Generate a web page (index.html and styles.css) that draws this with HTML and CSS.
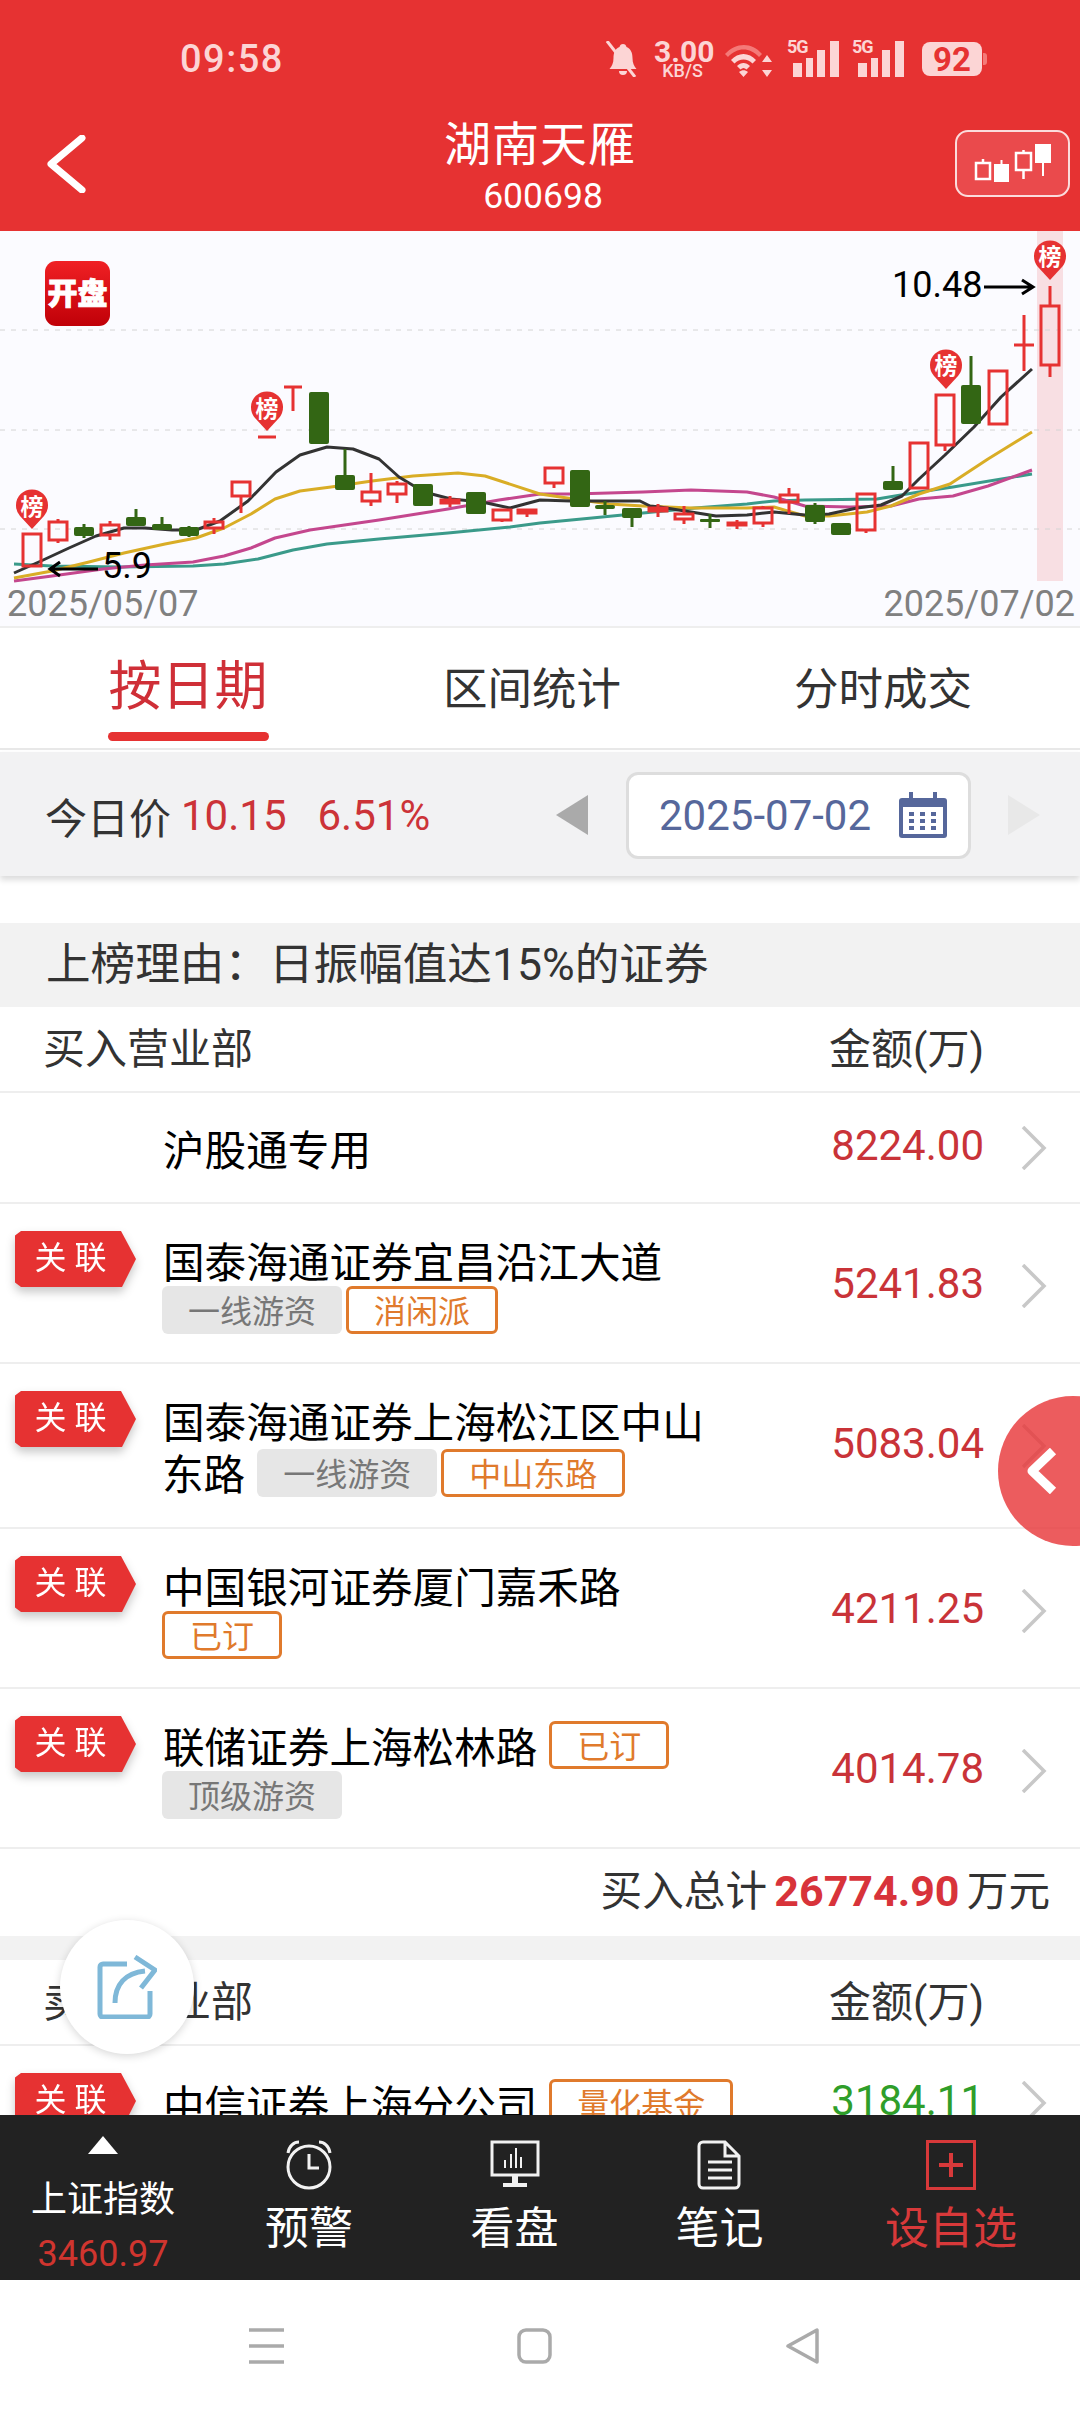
FILE: index.html
```html
<!DOCTYPE html>
<html lang="zh-CN">
<head>
  <meta charset="UTF-8" />
  <meta name="viewport" content="width=device-width, initial-scale=1.0" />
  <title>湖南天雁 龙虎榜</title>
  <link rel="stylesheet" href="styles.css">
</head>
<body>
  <div class="page">
    <header class="top">
      <div class="status">
        <span class="time">09:58</span>
        <div class="status-icons">
          <svg class="ic-bell" viewBox="0 0 36 36"><path d="M18 3c-2 0-3 1-3.500 3C10 8 8.500 12 8.500 17c0 5-1.500 8-4 11h27c-2.500-3-4-6-4-11 0-5-1.500-9-6-11C21 4 20 3 18 3zM14 30a4 4 0 0 0 8 0z"/><path class="cut" d="M2 0l28 36" /></svg>
          <div class="speed"><b>3.00</b><small>KB/S</small></div>
          <svg class="ic-wifi" viewBox="0 0 50 36"><path class="dim" d="M1 13C12 1 28 1 38 13l-3 3C26 6 13 6 4 16z"/><path d="M7 19c7-8 18-8 25 0l-3.500 3.500c-5-5.500-13-5.500-18 0zM13 25c4-4 9-4 13 0l-3.500 3.500c-2-2-4-2-6 0zM19.500 36l-4.500-5c3-2.500 6-2.500 9 0zM43 14l5 7H38zM43 36l-5-7h10z"/></svg>
          <div class="signal"><span>5G</span><svg viewBox="0 0 52 36"><path d="M6 22h9v14H6zM19 17h7v19h-7zM30 9h8v27h-8zM43 0h9v36h-9z"/></svg></div>
          <div class="signal"><span>5G</span><svg viewBox="0 0 52 36"><path d="M6 22h9v14H6zM19 17h7v19h-7zM30 9h8v27h-8zM43 0h9v36h-9z"/></svg></div>
          <div class="battery">92</div>
        </div>
      </div>
      <div class="titlebar">
        <svg class="back" viewBox="0 0 40 58"><path d="M36 3L5 29l31 26" /></svg>
        <div class="title">
          <h1>湖南天雁</h1>
          <p>600698</p>
        </div>
        <div class="kline-btn">
          <svg viewBox="0 0 78 40"><path class="o" d="M1 20h14v16H1zM8 16v4M8 36v1M41 10h15v17H41zM48.500 7v3M48.500 27v9"/><path class="f" d="M19 21h15v18H19zM25.500 17h2v4h-2zM60 1h16v19H60zM67 20h2v13h-2z"/></svg>
        </div>
      </div>
    </header>

    <section class="chart">
      <svg class="chart-svg" viewBox="0 231 1080 397" width="1080" height="397">
        <defs>
          <linearGradient id="kp" x1="0" y1="0" x2="0" y2="1">
            <stop offset="0" stop-color="#f02024" />
            <stop offset="1" stop-color="#c00008" />
          </linearGradient>
        </defs>
        <rect class="today" x="1037" y="231" width="26" height="350" />
        <path class="grid" d="M0 330h1080M0 430h1080M0 529h1080" />

        <polyline class="ma ma-teal" points="14,564 52,566 120,567 193,566 224,564 258,559 293,550 327,544 379,539 448,533 510,527 540,523 592,518 643,513 695,508 747,504 774,501 805,500 877,499 919,492 953,487 1032,474" />
        <polyline class="ma ma-pink" points="14,581 52,576 103,569 145,565 193,562 224,556 251,548 275,538 310,530 379,520 448,509 499,500 540,494 574,494 643,492 691,490 747,492 774,497 805,506 850,507 891,506 919,499 953,496 988,486 1032,470" />
        <polyline class="ma ma-yellow" points="14,578 52,571 89,562 124,553 165,544 196,538 224,528 251,514 275,499 300,491 331,487 372,481 413,476 458,473 485,476 540,494 574,499 609,504 643,506 691,508 747,508 774,507 805,516 829,516 867,512 891,506 919,494 950,484 988,459 1032,432" />
        <polyline class="ma ma-black" points="14,573 41,561 69,548 96,536 124,528 145,528 172,530 196,530 220,521 248,501 276,472 300,455 327,447 353,449 379,459 399,477 424,492 451,499 482,502 510,508 540,500 571,501 640,501 650,506 660,507 691,512 716,516 747,515 774,512 805,515 829,514 857,508 881,505 902,496 919,479 945,455 974,427 1001,397 1032,369" />

        <path class="wick-up" d="M58 519v3M58 540v3M110 521v4M110 535v5M214 518v4M214 528v6M241 496v17M258 437h18M284 387h18M293 387v24M371 473v19M371 501v5M397 481v3M397 494v9M450 496v11M502 520v2M527 513v4M554 483v5M658 504v13M684 506v8M684 519v5M737 520v9M763 506v2M763 523v4M789 488v7M789 502v12M866 530v3M945 445v6M1024 315v56M1014 345h20M1050 286v20M1050 365v12" />
        <g class="body-up">
          <rect x="23" y="534" width="18" height="32" />
          <rect x="49" y="522" width="18" height="18" />
          <rect x="101" y="525" width="18" height="10" />
          <rect x="205" y="522" width="18" height="6" />
          <rect x="232" y="482" width="18" height="14" />
          <rect x="362" y="492" width="18" height="9" />
          <rect x="388" y="484" width="18" height="10" />
          <rect x="441" y="500" width="18" height="3" />
          <rect x="493" y="510" width="18" height="10" />
          <rect x="518" y="510" width="18" height="3" />
          <rect x="545" y="468" width="18" height="15" />
          <rect x="649" y="508" width="18" height="3" />
          <rect x="675" y="514" width="18" height="5" />
          <rect x="728" y="523" width="18" height="2" />
          <rect x="754" y="508" width="18" height="15" />
          <rect x="780" y="495" width="18" height="7" />
          <rect x="857" y="494" width="18" height="36" />
          <rect x="910" y="443" width="18" height="45" />
          <rect x="936" y="395" width="18" height="50" />
          <rect x="989" y="371" width="18" height="53" />
          <rect x="1041" y="306" width="18" height="59" />
        </g>
        <path class="wick-down" d="M84 524v14M136 509v10M162 517v8M189 526v11M345 449v30M605 501v14M632 517v10M710 514v14M815 503v21M893 466v18M971 356v30" />
        <g class="body-down">
          <rect x="74" y="527" width="20" height="9" rx="2" />
          <rect x="126" y="517" width="20" height="9" rx="2" />
          <rect x="152" y="524" width="20" height="6" rx="2" />
          <rect x="179" y="527" width="20" height="9" rx="2" />
          <rect x="309" y="392" width="20" height="52" rx="2" />
          <rect x="335" y="475" width="20" height="15" rx="2" />
          <rect x="413" y="484" width="20" height="22" rx="2" />
          <rect x="466" y="492" width="20" height="22" rx="2" />
          <rect x="570" y="470" width="20" height="37" rx="2" />
          <rect x="595" y="505" width="20" height="4" rx="2" />
          <rect x="622" y="508" width="20" height="10" rx="2" />
          <rect x="700" y="519" width="20" height="3" rx="1" />
          <rect x="805" y="505" width="20" height="17" rx="2" />
          <rect x="831" y="523" width="20" height="12" rx="2" />
          <rect x="883" y="481" width="20" height="9" rx="2" />
          <rect x="961" y="385" width="20" height="39" rx="2" />
        </g>

        <g class="pin">
          <path d="M32 529l-12-13a16 16 0 1 1 24 0z" />
          <text x="32" y="515">榜</text>
          <path d="M267 431l-12-13a16 16 0 1 1 24 0z" />
          <text x="267" y="417">榜</text>
          <path d="M946 389l-12-13a16 16 0 1 1 24 0z" />
          <text x="946" y="374">榜</text>
          <path d="M1050 280l-12-13a16 16 0 1 1 24 0z" />
          <text x="1050" y="265">榜</text>
        </g>

        <rect x="45" y="261" width="65" height="65" rx="11" fill="url(#kp)" />
        <text class="kp-text" x="77.500" y="304">开盘</text>

        <text class="price" x="892" y="297">10.48</text>
        <path class="arrow" d="M984 287h48M1022 280l11 7-11 7" />
        <text class="price" x="102" y="578">5.9</text>
        <path class="arrow" d="M98 569H51M60 562l-10 7 10 7" />

        <text class="axis" x="7" y="616">2025/05/07</text>
        <text class="axis axis-end" x="1075" y="616">2025/07/02</text>
      </svg>
    </section>

    <nav class="tabs">
      <div class="tab active"><span>按日期</span><i></i></div>
      <div class="tab"><span>区间统计</span></div>
      <div class="tab"><span>分时成交</span></div>
    </nav>

    <div class="datebar">
      <span class="today-label">今日价</span>
      <span class="today-val">10.15</span>
      <span class="today-val pct">6.51%</span>
      <span class="tri tri-left"></span>
      <div class="datebox">
        <span>2025-07-02</span>
        <svg viewBox="0 0 48 46"><path class="cal" d="M3 6h42a3 3 0 0 1 3 3v34a3 3 0 0 1-3 3H3a3 3 0 0 1-3-3V9a3 3 0 0 1 3-3z"/><path class="cal-in" d="M4 15h40v27H4z"/><path class="cal-pin" d="M12 0v11M36 0v11"/><path class="cal-dot" d="M10 20h5v4h-5zM21 20h5v4h-5zM32 20h5v4h-5zM10 27h5v4h-5zM21 27h5v4h-5zM32 27h5v4h-5zM10 34h5v4h-5zM21 34h5v4h-5zM32 34h5v4h-5z"/></svg>
      </div>
      <span class="tri tri-right"></span>
    </div>

    <main class="list">
      <div class="reason">上榜理由：日振幅值达15%的证券</div>

      <div class="list-head"><span>买入营业部</span><span>金额(万)</span></div>

      <div class="row row-single">
        <div></div>
        <div class="name"><span class="nm">沪股通专用</span></div>
        <div class="amount">8224.00</div>
        <svg class="chev" viewBox="0 0 26 44"><path d="M2 1l21 21L2 43" /></svg>
      </div>
      <div class="row">
        <div class="rel"><span>关 联</span></div>
        <div class="name"><span class="nm">国泰海通证券宜昌沿江大道</span><span class="chip">一线游资</span><span class="chip orange">消闲派</span></div>
        <div class="amount">5241.83</div>
        <svg class="chev" viewBox="0 0 26 44"><path d="M2 1l21 21L2 43" /></svg>
      </div>
      <div class="row row-tall">
        <div class="rel"><span>关 联</span></div>
        <div class="name"><span class="nm">国泰海通证券上海松江区中山东路</span><span class="chip">一线游资</span><span class="chip orange">中山东路</span></div>
        <div class="amount">5083.04</div>
        <svg class="chev" viewBox="0 0 26 44"><path d="M2 1l21 21L2 43" /></svg>
      </div>
      <div class="row">
        <div class="rel"><span>关 联</span></div>
        <div class="name"><span class="nm">中国银河证券厦门嘉禾路</span><span class="chip orange">已订</span></div>
        <div class="amount">4211.25</div>
        <svg class="chev" viewBox="0 0 26 44"><path d="M2 1l21 21L2 43" /></svg>
      </div>
      <div class="row">
        <div class="rel"><span>关 联</span></div>
        <div class="name"><span class="nm">联储证券上海松林路</span><span class="chip orange same-line">已订</span><span class="chip">顶级游资</span></div>
        <div class="amount">4014.78</div>
        <svg class="chev" viewBox="0 0 26 44"><path d="M2 1l21 21L2 43" /></svg>
      </div>

      <div class="total">买入总计 <b>26774.90</b> 万元</div>
      <div class="band"></div>

      <div class="list-head"><span>卖出营业部</span><span>金额(万)</span></div>
      <div class="row">
        <div class="rel"><span>关 联</span></div>
        <div class="name"><span class="nm">中信证券上海分公司</span><span class="chip orange same-line">量化基金</span></div>
        <div class="amount green">3184.11</div>
        <svg class="chev" viewBox="0 0 26 44"><path d="M2 1l21 21L2 43" /></svg>
      </div>
    </main>

    <footer class="bottom">
      <div class="index">
        <i class="up-tri"></i>
        <span>上证指数</span>
        <em>3460.97</em>
      </div>
      <div class="nav-item">
        <svg viewBox="0 0 50 50"><circle cx="25" cy="27" r="21" /><path d="M25 14v14h10M4 13C5 6 10 2 15 2M46 13C45 6 40 2 35 2" /></svg>
        <span>预警</span>
      </div>
      <div class="nav-item">
        <svg viewBox="0 0 50 50"><path d="M2 2h46v33H2z" /><path class="fill" d="M22 35h6v8h-6zM13 43h24v4H13z"/><path d="M15 28v-8M21 28V14M26 28V8M31 28V17" class="thin" /></svg>
        <span>看盘</span>
      </div>
      <div class="nav-item">
        <svg viewBox="0 0 50 50"><path d="M8 2h22l14 14v28a4 4 0 0 1-4 4H8a4 4 0 0 1-4-4V6a4 4 0 0 1 4-4zM30 2v14h14M13 22h24M13 30h24M13 38h24" /></svg>
        <span>笔记</span>
      </div>
      <div class="nav-item add">
        <svg viewBox="0 0 50 50"><path d="M1.500 1.500h47v47h-47z" /><path class="plus" d="M25 13v24M13 25h24" /></svg>
        <span>设自选</span>
      </div>
    </footer>

    <div class="sysnav">
      <svg viewBox="0 0 35 36"><path d="M0 2h35M0 18h35M0 34h35" /></svg>
      <svg viewBox="0 0 35 36"><rect x="2" y="2" width="31" height="32" rx="7" /></svg>
      <svg viewBox="0 0 35 36"><path d="M32 2v32L3 18z" /></svg>
    </div>

    <!-- floating buttons over the list -->
    <div class="share">
      <svg viewBox="0 0 60 64"><path d="M30 9H6a3 3 0 0 0-3 3v47a3 3 0 0 0 3 3h44a3 3 0 0 0 3-3V36" /><path d="M18 48c0-18 10-30 30-32M38 2l20 13-14 18" /></svg>
    </div>
    <div class="side-btn">
      <svg viewBox="0 0 32 46"><path d="M27 3L6 23l21 20" /></svg>
    </div>
  </div>
</body>
</html>
```

FILE: styles.css
```css
* {
  box-sizing: border-box;
}
body {
  margin: 0;
  background: #fff;
  font-family: Roboto, "Noto Sans CJK SC", sans-serif;
  color: #333;
}
.page {
  position: relative;
  width: 1080px;
  height: 2412px;
  display: flex;
  flex-direction: column;
  overflow: hidden;
}

/* header */
.top {
  height: 231px;
  background: #e63232;
  color: #fff;
  flex: none;
}
.status {
  height: 112px;
  padding: 6px 93px 0 180px;
  display: flex;
  align-items: center;
  justify-content: space-between;
  color: #fcd5d5;
}
.time {
  font-size: 38px;
  font-weight: 500;
  letter-spacing: 1.5px;
}
.status-icons {
  display: flex;
  align-items: center;
  gap: 13px;
}
.ic-bell {
  width: 36px;
  height: 36px;
  fill: #fcd5d5;
}
.ic-bell .cut {
  fill: none;
  stroke: #fcd5d5;
  stroke-width: 3;
}
.speed {
  width: 57px;
  text-align: center;
  line-height: 1;
}
.speed b {
  display: block;
  font-size: 30px;
  font-weight: 700;
  line-height: 24px;
}
.speed small {
  display: block;
  font-size: 18px;
  font-weight: 500;
  line-height: 14px;
}
.ic-wifi {
  width: 50px;
  height: 36px;
  fill: #fcd5d5;
}
.ic-wifi .dim {
  fill: #f47a78;
}
.signal {
  position: relative;
  width: 52px;
  height: 36px;
}
.signal span {
  position: absolute;
  left: 0;
  top: -4px;
  font-size: 18px;
  font-weight: 700;
  letter-spacing: -1px;
  line-height: 20px;
}
.signal svg {
  display: block;
  width: 52px;
  height: 36px;
  fill: #fcd5d5;
}
.battery {
  position: relative;
  width: 60px;
  height: 34px;
  margin: 0 5px 0 5px;
  border-radius: 8px;
  background: #fcd5d5;
  color: #e63232;
  font-size: 33px;
  font-weight: 700;
  line-height: 35px;
  text-align: center;
}
.battery::after {
  content: "";
  position: absolute;
  right: -5px;
  top: 11px;
  width: 4px;
  height: 12px;
  border-radius: 0 3px 3px 0;
  background: #f47a78;
}
.titlebar {
  height: 119px;
  padding: 4px 10px 0 46px;
  display: grid;
  grid-template-columns: 1fr auto 1fr;
  align-items: start;
}
.back {
  width: 40px;
  height: 58px;
  margin-top: 19px;
  fill: none;
  stroke: #fff;
  stroke-width: 7;
  stroke-linecap: round;
  stroke-linejoin: round;
}
.title {
  text-align: center;
  transform: translateX(-18px);
}
.title h1 {
  margin: 0;
  font-size: 47px;
  font-weight: 400;
  line-height: 58px;
  letter-spacing: 1px;
}
.title p {
  margin: 0;
  padding-left: 6px;
  font-size: 35.500px;
  line-height: 44px;
}
.kline-btn {
  justify-self: end;
  width: 115px;
  height: 67px;
  margin-top: 14px;
  padding: 11px 0 0 18px;
  background: #ea4a4c;
  border: 2px solid #fbdcdc;
  border-radius: 13px;
}
.kline-btn svg {
  display: block;
  width: 78px;
  height: 40px;
  overflow: visible;
}
.kline-btn .o {
  fill: none;
  stroke: #fff;
  stroke-width: 2.500;
}
.kline-btn .f {
  fill: #fff;
}

/* chart */
.chart {
  flex: none;
  height: 397px;
  background: #fbfbff;
  border-bottom: 2px solid #eee;
}
.chart-svg {
  display: block;
}
.today {
  fill: #f8dfe3;
}
.grid {
  fill: none;
  stroke: #d4d4d4;
  stroke-width: 1;
  stroke-dasharray: 5 6;
}
.ma {
  fill: none;
  stroke-width: 3;
  stroke-linejoin: round;
}
.ma-black {
  stroke: #333;
}
.ma-yellow {
  stroke: #d9ad26;
}
.ma-pink {
  stroke: #c4478e;
}
.ma-teal {
  stroke: #3a9a8a;
}
.wick-up {
  fill: none;
  stroke: #e63232;
  stroke-width: 3;
}
.body-up rect {
  fill: none;
  stroke: #e63232;
  stroke-width: 3;
}
.wick-down {
  fill: none;
  stroke: #336614;
  stroke-width: 3;
}
.body-down rect {
  fill: #336614;
}
.pin path {
  fill: #e63232;
}
.pin text {
  fill: #fff;
  font-size: 23px;
  font-weight: 700;
  text-anchor: middle;
}
.kp-text {
  fill: #fff;
  stroke: #fff;
  stroke-width: 0.8;
  font-size: 30px;
  font-weight: 900;
  text-anchor: middle;
}
.price {
  fill: #000;
  font-size: 36px;
}
.arrow {
  fill: none;
  stroke: #000;
  stroke-width: 3;
}
.axis {
  fill: #808080;
  font-size: 36px;
}
.axis-end {
  text-anchor: end;
}

/* tabs */
.tabs {
  flex: none;
  height: 122px;
  padding-top: 24px;
  display: grid;
  grid-template-columns: 376px 312px 390px;
  border-bottom: 2px solid #e8e8e8;
}
.tab {
  display: flex;
  flex-direction: column;
  align-items: center;
  font-size: 44.500px;
  line-height: 70px;
  color: #333;
}
.tab span {
  padding-top: 3px;
}
.tab.active {
  font-size: 53px;
  color: #cf2f37;
}
.tab.active span {
  padding-top: 0;
  height: 70px;
}
.tab i {
  display: block;
  width: 161px;
  height: 9px;
  margin-top: 10px;
  background: #e63232;
  border-radius: 5px;
}

/* date bar */
.datebar {
  flex: none;
  height: 124px;
  margin-top: 2px;
  padding: 2px 40px 0 45px;
  display: flex;
  align-items: center;
  background: #f2f2f3;
  box-shadow: 0 4px 6px rgba(0, 0, 0, 0.14);
  font-size: 42px;
}
.today-val {
  margin-left: 10px;
  color: #cc3338;
}
.today-val.pct {
  margin-left: 31px;
}
.tri {
  width: 32px;
  height: 40px;
}
.tri-left {
  margin-left: auto;
  background: #aaa;
  clip-path: polygon(100% 0, 100% 100%, 0 50%);
}
.tri-right {
  background: #e8e8e8;
  clip-path: polygon(0 0, 100% 50%, 0 100%);
}
.datebox {
  width: 345px;
  height: 87px;
  margin: 0 37px 0 38px;
  padding: 0 21px 0 30px;
  display: flex;
  align-items: center;
  justify-content: space-between;
  background: #fff;
  border: 3px solid #ddd;
  border-radius: 12px;
  color: #56679b;
}
.datebox svg {
  width: 48px;
  height: 46px;
}
.cal {
  fill: #56679b;
}
.cal-in {
  fill: #fff;
}
.cal-pin {
  stroke: #56679b;
  stroke-width: 4;
}
.cal-dot {
  fill: #56679b;
}

/* list */
.list {
  flex: 1;
  min-height: 0;
  margin-top: 47px;
  overflow: hidden;
}
.reason {
  height: 84px;
  padding-left: 46px;
  background: #f2f2f2;
  font-size: 44.600px;
  line-height: 84px;
}
.list-head {
  height: 86px;
  padding: 0 96px 8px 43px;
  display: flex;
  align-items: center;
  justify-content: space-between;
  border-bottom: 2px solid #eee;
  font-size: 42px;
}
.row {
  padding: 30px 33px 24px 0;
  display: grid;
  grid-template-columns: 162px 580px 1fr 26px;
  align-items: center;
  border-bottom: 2px solid #eee;
}
.row-single {
  min-height: 111px;
  padding: 27px 33px 27px 0;
}
.row-tall {
  padding-bottom: 29px;
}
.row-tall .chip {
  margin-top: 3px;
}
.rel {
  align-self: start;
  width: 121px;
  height: 56px;
  margin: -3px 0 0 15px;
  filter: drop-shadow(0 5px 5px rgba(0, 0, 0, 0.22));
}
.rel span {
  display: block;
  height: 56px;
  background: #e63232;
  clip-path: polygon(6px 0, 106px 0, 121px 50%, 107px 100%, 6px 100%, 0 92%, 0 8%);
  color: #fff;
  font-size: 32px;
  line-height: 54px;
  text-align: center;
  padding-right: 10px;
}
.name {
  font-family: "Noto Sans CJK SC", sans-serif;
  font-size: 41.600px;
  line-height: 52px;
  color: #000;
}
.nm {
  margin-right: 12px;
  padding-left: 1px;
}
.chip {
  display: inline-block;
  height: 48px;
  margin-right: 4px;
  padding: 0 26px;
  background: #e6e6e6;
  border-radius: 6px;
  color: #777;
  font-size: 32px;
  line-height: 46px;
  vertical-align: top;
}
.chip.orange {
  padding: 0 25px;
  background: #fff;
  border: 3px solid #e07a2c;
  color: #e07a2c;
  line-height: 40px;
}
.chip.same-line {
  margin-top: 2px;
}
.amount {
  margin: 0 37px 5px 0;
  font-size: 42px;
  color: #c93338;
  text-align: right;
}
.amount.green {
  color: #2f9e2a;
}
.chev {
  width: 26px;
  height: 44px;
  fill: none;
  stroke: #c8c8c8;
  stroke-width: 3.500;
}
.total {
  height: 87px;
  padding-right: 30px;
  font-size: 41.600px;
  line-height: 84px;
  text-align: right;
  word-spacing: -3px;
}
.total b {
  font-size: 43px;
  color: #d8333a;
  font-weight: 700;
}
.band {
  height: 24px;
  background: #f2f2f2;
}

/* bottom nav */
.bottom {
  flex: none;
  height: 165px;
  display: grid;
  grid-template-columns: 206px 206px 205px 205px 1fr;
  background: #222;
  color: #fff;
}
.index {
  display: flex;
  flex-direction: column;
  align-items: center;
  padding-top: 21px;
}
.up-tri {
  width: 30px;
  height: 18px;
  background: #fff;
  clip-path: polygon(50% 0, 100% 100%, 0 100%);
}
.index span {
  margin-top: 24px;
  font-size: 36px;
  line-height: 44px;
}
.index em {
  margin-top: 10px;
  font-style: normal;
  font-size: 36px;
  line-height: 44px;
  color: #d0352f;
}
.nav-item {
  display: flex;
  flex-direction: column;
  align-items: center;
  padding-top: 25px;
  font-size: 44px;
  line-height: 50px;
}
.nav-item svg {
  width: 50px;
  height: 50px;
  margin-bottom: 14px;
  fill: none;
  stroke: #f2f2f2;
  stroke-width: 3;
}
.nav-item .fill {
  fill: #f2f2f2;
  stroke: none;
}
.nav-item .thin {
  stroke-width: 2;
}
.nav-item.add {
  color: #d8393a;
}
.nav-item.add svg {
  stroke: #d8393a;
}
.nav-item.add .plus {
  stroke-width: 4;
}

/* system nav */
.sysnav {
  flex: none;
  height: 132px;
  padding: 0 0 0 249px;
  display: flex;
  align-items: center;
  gap: 233px;
  background: #fff;
}
.sysnav svg {
  width: 35px;
  height: 36px;
  fill: none;
  stroke: #aaa;
  stroke-width: 3.500;
  stroke-linejoin: round;
}

/* floating */
.share {
  position: absolute;
  left: 60px;
  top: 1920px;
  width: 134px;
  height: 134px;
  display: flex;
  align-items: center;
  justify-content: center;
  background: #fff;
  border-radius: 50%;
  box-shadow: 0 2px 8px rgba(0, 0, 0, 0.16);
}
.share svg {
  width: 60px;
  height: 64px;
  fill: none;
  stroke: #7fb8d8;
  stroke-width: 5;
  stroke-linejoin: round;
}
.side-btn {
  position: absolute;
  left: 998px;
  top: 1396px;
  width: 150px;
  height: 150px;
  padding: 52px 0 0 27px;
  background: rgba(232, 56, 58, 0.82);
  border-radius: 50%;
}
.side-btn svg {
  display: block;
  width: 34px;
  height: 46px;
  fill: none;
  stroke: #fff;
  stroke-width: 9;
  stroke-linejoin: round;
}
```
